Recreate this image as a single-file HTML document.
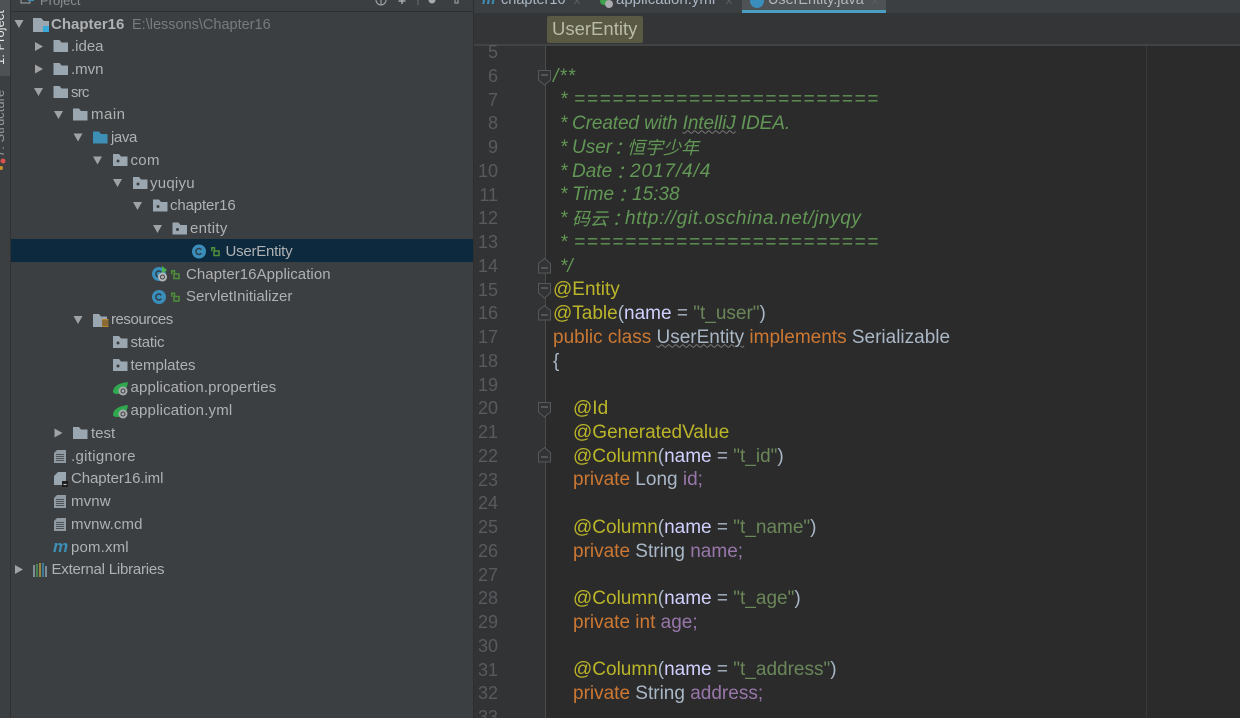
<!DOCTYPE html>
<html><head><meta charset="utf-8"><style>
html,body{margin:0;padding:0;background:#3c3f41}
#p{position:relative;width:1240px;height:718px;overflow:hidden;background:#3c3f41;font-family:"Liberation Sans","Noto Sans CJK SC",sans-serif}
.a{position:absolute}
.t{position:absolute;white-space:pre;font-size:15px;line-height:22px;height:22px;color:#afb1b3;margin-top:.6px}
.c{position:absolute;white-space:pre;font-size:19px;line-height:24px;height:24px;color:#a9b7c6;left:553px;margin-top:.7px}
.i{left:573px}
.n{position:absolute;white-space:pre;font-size:18px;line-height:24px;height:24px;color:#585b5d;left:470px;width:28px;text-align:right}
.m{font-style:italic;color:#629755;left:560px}
.h{left:572px}
.cj{font-size:18px;font-family:"Noto Sans CJK SC",sans-serif}
.co{font-size:18px;font-family:"Noto Sans CJK TC",sans-serif}
.k{color:#cc7832}.an{color:#bbb529}.s{color:#6a8759}.f{color:#9876aa}.p{color:#d0d0ff}.w{text-decoration:underline wavy #777;text-decoration-thickness:1px}
svg{position:absolute;left:0;top:0}
.v{position:absolute;white-space:pre;transform-origin:left top;transform:rotate(-90deg);font-size:13px;line-height:12px;height:12px}
</style></head><body><div id="p">
<div class="a" style="left:0;top:0;width:10px;height:718px;background:#3c3f41"></div>
<div class="a" style="left:0;top:0;width:10px;height:76px;background:#4e5254"></div>
<div class="a" style="left:10px;top:0;width:1px;height:718px;background:#2f3133"></div>
<div class="a" style="left:11px;top:11px;width:463px;height:1px;background:#2d2f30"></div>
<div class="a" style="left:11px;top:239px;width:462px;height:23px;background:#0d293e"></div>
<div class="a" style="left:473px;top:0;width:1px;height:718px;background:#2d2f30"></div>
<div class="a" style="left:474px;top:0;width:766px;height:13px;background:#3c3f41"></div>
<div class="a" style="left:742px;top:0;width:144px;height:10px;background:#4e5254"></div>
<div class="a" style="left:742px;top:10px;width:144px;height:3px;background:#4a9ec2"></div>
<div class="a" style="left:474px;top:13px;width:766px;height:31px;background:#333537"></div>
<div class="a" style="left:474px;top:44px;width:766px;height:2px;background:#414345"></div>
<div class="a" style="left:474px;top:46px;width:766px;height:672px;background:#2b2b2b"></div>
<div class="a" style="left:474px;top:46px;width:71px;height:672px;background:#313335"></div>
<div class="a" style="left:545px;top:46px;width:1px;height:672px;background:#484a4c"></div>
<div class="a" style="left:1146px;top:46px;width:1px;height:672px;background:#3a3a3a"></div>
<div class="a" style="left:547px;top:16px;width:96px;height:27px;background:#5a5a44;border-radius:2px"></div>
<div class="a" style="left:552px;top:16px;font-size:18.500px;line-height:26px;color:#b9bba8;white-space:pre">UserEntity</div>

<div class="v" style="left:-6px;top:65px;color:#e8e8e8">1: Project</div>
<div class="v" style="left:-6px;top:157px;color:#9a9c9e">7: Structure</div>

<svg width="1240" height="718" viewBox="0 0 1240 718">
<defs>
<path id="d" d="M0 0h9l-4.500 8z" fill="#a0a2a4"/>
<path id="r" d="M0 0l8 4.500-8 4.500z" fill="#a0a2a4"/>
<path id="fo" d="M0 0h6l2 2.500h6.500v9.500H0z" fill="#9aa7b0"/>
<path id="fb" d="M0 0h6l2 2.500h6.500v9.500H0z" fill="#3d8fb5"/>
<g id="fp"><path d="M0 0h6l2 2.500h6.500v9.500H0z" fill="#9aa7b0"/><circle cx="5" cy="7" r="1.500" fill="#3c3f41"/></g>
<g id="cc"><circle cx="7" cy="7" r="7" fill="#3a8ebb"/><path d="M9.300 5.300a3 3 0 1 0 0 3.400" fill="none" stroke="#2f3f4b" stroke-width="1.500"/></g>
<g id="lk" fill="none" stroke="#4f8f3a" stroke-width="1.500"><path d="M3.500 4V.8H.8v3.500"/><rect x="3" y="4" width="5" height="4.500"/></g>
<g id="fl"><path d="M4 0h9v13H1V3z" fill="#8f9aa3"/><path d="M3 4.500h8M3 6.500h8M3 8.500h8M3 10.500h8" stroke="#4f5356"/></g>
<g id="sp"><path d="M0 10C0 5 5 1 15 0c-1 8-5 12-11 12-2 0-4-1-4-2z" fill="#2fa84f"/><circle cx="10" cy="9" r="4.500" fill="#a9abad"/><circle cx="10" cy="9" r="2" fill="none" stroke="#3c3f41"/></g>
<g id="fd"><path d="M0.500 0.500h12v9.500l-6 5-6-5z" fill="#313335" stroke="#55585a"/><path d="M3 5h7" stroke="#777"/></g>
<g id="fu"><path d="M0.500 15v-9.500l6-5 6 5V15z" fill="#313335" stroke="#55585a"/><path d="M3 10h7" stroke="#777"/></g>
</defs>
<use href="#d" x="14.500" y="20"/><path d="M33 18h8l3 3h5v11H33z" fill="#9aa7b0"/><rect x="43" y="26" width="6" height="6" fill="#38a8d8"/>
<use href="#r" x="35" y="42"/><use href="#fo" x="53.500" y="40"/>
<use href="#r" x="35" y="64.500"/><use href="#fo" x="53.500" y="63"/>
<use href="#d" x="34" y="88"/><use href="#fo" x="53.500" y="86"/>
<use href="#d" x="54" y="111"/><use href="#fo" x="73" y="108.500"/>
<use href="#d" x="73.500" y="133.500"/><use href="#fb" x="93" y="131.500"/>
<use href="#d" x="93" y="156.500"/><use href="#fp" x="113" y="154"/>
<use href="#d" x="113" y="179"/><use href="#fp" x="133" y="177"/>
<use href="#d" x="133" y="202"/><use href="#fp" x="153" y="199.500"/>
<use href="#d" x="153" y="225"/><use href="#fp" x="172.500" y="222.500"/>
<use href="#cc" x="192" y="244.500"/><use href="#lk" x="211" y="247"/>
<use href="#cc" x="152" y="267"/><path d="M162 266l5 4-5 4z" fill="#4cb04c"/><circle cx="162.500" cy="277" r="4.500" fill="#b5b7b9"/><circle cx="162.500" cy="277" r="2" fill="none" stroke="#3c3f41"/><use href="#lk" x="171" y="270"/>
<use href="#cc" x="152" y="290"/><use href="#lk" x="171" y="292.500"/>
<use href="#d" x="73.500" y="316"/><path d="M93 314h6l2 2.500h6v10.500H93z" fill="#9aa7b0"/><rect x="102" y="319" width="6.500" height="8" fill="#b8862c"/><path d="M102 321h6.500M102 323h6.500M102 325h6.500" stroke="#3c3f41" stroke-width=".7"/>
<use href="#fp" x="113" y="336"/>
<use href="#fp" x="113" y="359"/>
<use href="#sp" x="113" y="382"/>
<use href="#sp" x="113" y="405"/>
<use href="#r" x="54.500" y="428.500"/><use href="#fo" x="73" y="427"/>
<use href="#fl" x="53" y="450"/>
<g><path d="M58 472h8v13H54v-9z" fill="#9aa7b0"/><rect x="62" y="481" width="6" height="6" fill="#1f1f1f"/><path d="M63.500 484.500h3" stroke="#ccc"/></g>
<use href="#fl" x="53" y="495"/>
<use href="#fl" x="53" y="518"/>
<text x="53" y="552" font-family="Liberation Sans" font-size="17" font-style="italic" font-weight="bold" fill="#3d8fb5">m</text>
<use href="#r" x="15" y="565"/><path d="M34 565v12" stroke="#9aa7b0" stroke-width="1.500"/><path d="M37 564v13" stroke="#4a9a5a" stroke-width="1.500"/><path d="M40 563v14" stroke="#b9a040" stroke-width="1.500"/><path d="M43 563v14" stroke="#3d8fb5" stroke-width="1.500"/><path d="M46 566v11" stroke="#9aa7b0" stroke-width="1.500"/>
<use href="#fd" x="538" y="70"/><use href="#fu" x="538" y="258"/><use href="#fd" x="538" y="283"/><use href="#fu" x="538" y="305"/><use href="#fd" x="538" y="402"/><use href="#fu" x="538" y="447"/>
<circle cx="3" cy="161" r="2.500" fill="#d9534f"/><circle cx="1" cy="168" r="2" fill="#c9912c"/>
<path d="M21 -3h9v6h-9z" fill="none" stroke="#9aa7b0"/><rect x="28" y="-2" width="6" height="3" fill="#3d8fb5"/>
<circle cx="381" cy="0" r="5" fill="none" stroke="#a7a9ab"/><path d="M381 -3v8" stroke="#a7a9ab"/>
<path d="M402 -3v7M398.500 1h7" stroke="#a7a9ab" stroke-width="1.500"/>
<path d="M418 0v5" stroke="#6a6c6e"/><circle cx="432" cy="0" r="3.500" fill="#a7a9ab"/><path d="M455 0v3h3V0" fill="none" stroke="#a7a9ab"/>
<circle cx="604" cy="1" r="4" fill="#3da04a"/><circle cx="609" cy="4" r="4" fill="#a9abad"/>
<circle cx="757" cy="1" r="7" fill="#3a8ebb"/>
<path d="M574 -2l6 6M580 -2l-6 6M726 -2l6 6M732 -2l-6 6M872 -2l6 6M878 -2l-6 6" stroke="#5a5c5e" stroke-width="1"/>
</svg>

<div class="t" style="left:40px;top:-11px;color:#8d8f91;font-size:13px">Project</div>
<div class="a" style="left:482px;top:-11px;font-size:15px;line-height:22px;color:#3d8fb5;font-style:italic;font-weight:bold">m</div>
<div class="a" style="left:501px;top:-11px;font-size:14.500px;line-height:22px;color:#a9b7c6;white-space:pre">chapter16</div>
<div class="a" style="left:616px;top:-11px;font-size:15px;line-height:22px;color:#a9b7c6;white-space:pre">application.yml</div>
<div class="a" style="left:768px;top:-11px;font-size:14.400px;line-height:22px;color:#b4b6b8;white-space:pre">UserEntity.java</div>

<div class="t" style="left:51px;top:13px;font-weight:bold">Chapter16</div><div class="t" style="left:132px;top:13px;color:#787a7c;font-size:14.500px">E:\lessons\Chapter16</div>
<div class="t" style="left:71px;top:35px">.idea</div>
<div class="t" style="left:71px;top:58px">.mvn</div>
<div class="t" style="left:71px;top:81px;letter-spacing:-.8px">src</div>
<div class="t" style="left:91px;top:103.500px;letter-spacing:.5px">main</div>
<div class="t" style="left:111px;top:126px;letter-spacing:-.4px">java</div>
<div class="t" style="left:130.500px;top:149px;letter-spacing:.3px">com</div>
<div class="t" style="left:150px;top:172px;letter-spacing:.25px">yuqiyu</div>
<div class="t" style="left:170px;top:194.500px;letter-spacing:-.13px">chapter16</div>
<div class="t" style="left:190px;top:217px;letter-spacing:.3px">entity</div>
<div class="t" style="left:225.500px;top:240px;letter-spacing:-.23px">UserEntity</div>
<div class="t" style="left:186px;top:263px;letter-spacing:.06px">Chapter16Application</div>
<div class="t" style="left:186px;top:285.500px;letter-spacing:.03px">ServletInitializer</div>
<div class="t" style="left:111px;top:308px;letter-spacing:-.45px">resources</div>
<div class="t" style="left:130.500px;top:331px;letter-spacing:-.2px">static</div>
<div class="t" style="left:130.500px;top:354px">templates</div>
<div class="t" style="left:130.500px;top:376.500px;letter-spacing:.15px">application.properties</div>
<div class="t" style="left:130.500px;top:399px;letter-spacing:.18px">application.yml</div>
<div class="t" style="left:91px;top:422px">test</div>
<div class="t" style="left:71px;top:445px;letter-spacing:.3px">.gitignore</div>
<div class="t" style="left:71px;top:467.500px;letter-spacing:-.08px">Chapter16.iml</div>
<div class="t" style="left:71px;top:490px;letter-spacing:.15px">mvnw</div>
<div class="t" style="left:71px;top:513px;letter-spacing:.08px">mvnw.cmd</div>
<div class="t" style="left:71px;top:536px;letter-spacing:.15px">pom.xml</div>
<div class="t" style="left:51.500px;top:558.500px;letter-spacing:-.22px">External Libraries</div>

<div class="n" style="top:40px">5</div>
<div class="n" style="top:64px">6</div>
<div class="n" style="top:87.500px">7</div>
<div class="n" style="top:111px">8</div>
<div class="n" style="top:135px">9</div>
<div class="n" style="top:159px">10</div>
<div class="n" style="top:182.500px">11</div>
<div class="n" style="top:206px">12</div>
<div class="n" style="top:230px">13</div>
<div class="n" style="top:254px">14</div>
<div class="n" style="top:277.500px">15</div>
<div class="n" style="top:301px">16</div>
<div class="n" style="top:325px">17</div>
<div class="n" style="top:349px">18</div>
<div class="n" style="top:372.500px">19</div>
<div class="n" style="top:396px">20</div>
<div class="n" style="top:420px">21</div>
<div class="n" style="top:444px">22</div>
<div class="n" style="top:467.500px">23</div>
<div class="n" style="top:491px">24</div>
<div class="n" style="top:515px">25</div>
<div class="n" style="top:539px">26</div>
<div class="n" style="top:562.500px">27</div>
<div class="n" style="top:586px">28</div>
<div class="n" style="top:610px">29</div>
<div class="n" style="top:634px">30</div>
<div class="n" style="top:657.500px">31</div>
<div class="n" style="top:681px">32</div>
<div class="n" style="top:705px">33</div>

<div class="c m" style="top:64px;left:553px;letter-spacing:1px">/**</div>
<div class="c m" style="top:87.500px">*</div><div class="c m" style="top:87.500px;left:574px;letter-spacing:1.650px">========================</div>
<div class="c m" style="top:111px">*</div><div class="c m h" style="top:111px;letter-spacing:-.1px">Created with <span class="w">IntelliJ</span> IDEA.</div>
<div class="c m" style="top:135px">*</div><div class="c m h" style="top:135px">User</div><div class="c m co" style="top:135px;left:609px">：</div><div class="c m cj" style="top:134px;left:627px">恒宇少年</div>
<div class="c m" style="top:159px">*</div><div class="c m h" style="top:159px">Date</div><div class="c m co" style="top:159px;left:611px">：</div><div class="c m" style="top:159px;left:630px;letter-spacing:.9px">2017/4/4</div>
<div class="c m" style="top:182.500px">*</div><div class="c m h" style="top:182.500px">Time</div><div class="c m co" style="top:182.500px;left:613px">：</div><div class="c m" style="top:182.500px;left:632px">15:38</div>
<div class="c m" style="top:206px">*</div><div class="c m h cj" style="top:205px">码云</div><div class="c m co" style="top:206px;left:607px">：</div><div class="c m" style="top:206px;left:625px;letter-spacing:.6px">http://git.oschina.net/jnyqy</div>
<div class="c m" style="top:230px">*</div><div class="c m" style="top:230px;left:574px;letter-spacing:1.650px">========================</div>
<div class="c m" style="top:254px">*/</div>
<div class="c an" style="top:277.500px">@Entity</div>
<div class="c" style="top:301px"><span class="an">@Table</span>(<span class="p">name</span> = <span class="s">"t_user"</span>)</div>
<div class="c" style="top:325px"><span class="k">public class</span> <span class="w">UserEntity</span> <span class="k">implements</span> Serializable</div>
<div class="c" style="top:349px">{</div>
<div class="c i an" style="top:396px">@Id</div>
<div class="c i an" style="top:420px">@GeneratedValue</div>
<div class="c i" style="top:444px"><span class="an">@Column</span>(<span class="p">name</span> = <span class="s">"t_id"</span>)</div>
<div class="c i" style="top:467.500px"><span class="k">private</span> Long <span class="f">id;</span></div>
<div class="c i" style="top:515px"><span class="an">@Column</span>(<span class="p">name</span> = <span class="s">"t_name"</span>)</div>
<div class="c i" style="top:539px"><span class="k">private</span> String <span class="f">name;</span></div>
<div class="c i" style="top:586px"><span class="an">@Column</span>(<span class="p">name</span> = <span class="s">"t_age"</span>)</div>
<div class="c i" style="top:610px"><span class="k">private int</span> <span class="f">age;</span></div>
<div class="c i" style="top:657.500px"><span class="an">@Column</span>(<span class="p">name</span> = <span class="s">"t_address"</span>)</div>
<div class="c i" style="top:681px"><span class="k">private</span> String <span class="f">address;</span></div>
</div></body></html>
